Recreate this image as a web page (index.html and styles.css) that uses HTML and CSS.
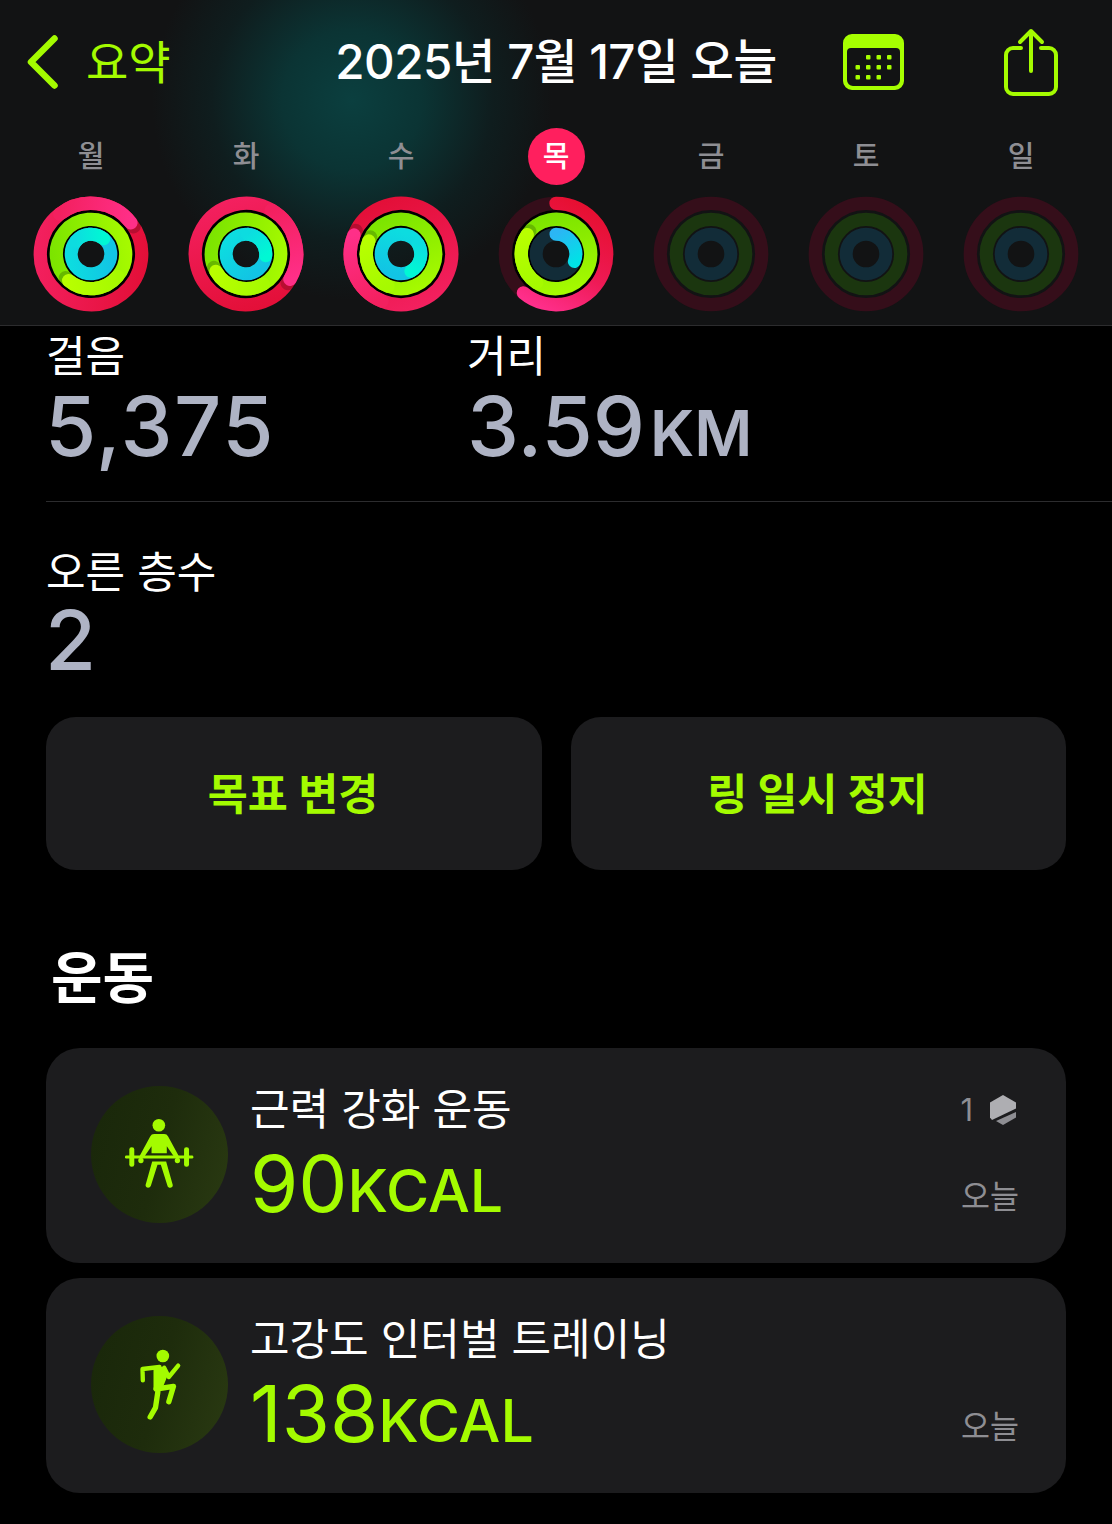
FILE: index.html
```html
<!DOCTYPE html>
<html lang="ko">
<head>
<meta charset="utf-8">
<title>활동 요약</title>
<link rel="stylesheet" href="styles.css">
</head>
<body>
<svg class="defs" width="0" height="0" aria-hidden="true">
  <defs>
    <linearGradient id="gPinkBase" gradientUnits="userSpaceOnUse" x1="40" y1="-40" x2="-40" y2="40"><stop offset="0" stop-color="#e30f38"/><stop offset="1" stop-color="#f3205f"/></linearGradient>
    <linearGradient id="gPinkEnd" gradientUnits="userSpaceOnUse" x1="-51" y1="0" x2="0" y2="-51"><stop offset="0" stop-color="#f3205f"/><stop offset="1" stop-color="#ff2f88"/></linearGradient>
    <linearGradient id="gGreenBase" gradientUnits="userSpaceOnUse" x1="28" y1="-28" x2="-28" y2="28"><stop offset="0" stop-color="#7ce400"/><stop offset="1" stop-color="#a6fa00"/></linearGradient>
    <linearGradient id="gGreenEnd" gradientUnits="userSpaceOnUse" x1="-36" y1="0" x2="0" y2="-36"><stop offset="0" stop-color="#a6fa00"/><stop offset="1" stop-color="#b8ff00"/></linearGradient>
    <linearGradient id="gCyanBase" gradientUnits="userSpaceOnUse" x1="15" y1="-15" x2="-15" y2="15"><stop offset="0" stop-color="#12c4e4"/><stop offset="1" stop-color="#0ddce0"/></linearGradient>
    <linearGradient id="gCyanEnd" gradientUnits="userSpaceOnUse" x1="-20" y1="0" x2="0" y2="-20"><stop offset="0" stop-color="#0ddce0"/><stop offset="1" stop-color="#00f8d4"/></linearGradient>
    <linearGradient id="gPinkArc" gradientUnits="userSpaceOnUse" x1="30" y1="-50" x2="-25" y2="50"><stop offset="0" stop-color="#e60f30"/><stop offset="0.55" stop-color="#ee1a55"/><stop offset="1" stop-color="#ff2f8c"/></linearGradient>
    <linearGradient id="gCyanArc" gradientUnits="userSpaceOnUse" x1="0" y1="-20" x2="20" y2="8"><stop offset="0" stop-color="#2bb6f4"/><stop offset="1" stop-color="#00e2e6"/></linearGradient>
    <g id="gaps" fill="none" stroke="#000">
      <circle r="42.700" stroke-width="3.200"/>
      <circle r="27.200" stroke-width="2.400"/>
    </g>
    <g id="pinkWrap" fill="none" stroke-width="13.300">
      <circle r="50.700" stroke="url(#gPinkBase)"/>
      <circle cx="4" cy="-50.700" r="7.500" fill="#000" opacity=".2"/>
      <path d="M-50.700 0A50.700 50.700 0 0 1 0-50.700" stroke="url(#gPinkEnd)" stroke-linecap="round"/>
    </g>
    <g id="greenWrap" fill="none" stroke-width="13.300">
      <circle r="34.700" stroke="url(#gGreenBase)"/>
      <circle cx="4" cy="-34.700" r="7" fill="#000" opacity=".2"/>
      <path d="M-34.700 0A34.700 34.700 0 0 1 0-34.700" stroke="url(#gGreenEnd)" stroke-linecap="round"/>
    </g>
    <g id="cyanWrap" fill="none" stroke-width="13">
      <circle r="19.800" stroke="url(#gCyanBase)"/>
      <path d="M-19.800 0A19.800 19.800 0 0 1 0-19.800" stroke="url(#gCyanEnd)" stroke-linecap="round"/>
    </g>
    <g id="tracks" fill="none">
      <circle r="50.700" stroke="#350e1a" stroke-width="13.300"/>
      <circle r="34.700" stroke="#1b360f" stroke-width="13.300"/>
      <circle r="19.800" stroke="#122c38" stroke-width="13"/>
    </g>
  </defs>
</svg>

<header class="top">
  <nav class="nav">
    <a class="back">
      <svg class="chevron" viewBox="0 0 31 54"><path d="M27.500 3.500 4 27l23.500 23.500"/></svg>
      <span class="back-label">요약</span>
    </a>
    <h1 class="title">2025년 7월 17일 오늘</h1>
    <div class="actions">
      <svg class="calendar" viewBox="0 0 61 56">
        <path class="cal-body" fill-rule="evenodd" d="M9 0h43a9 9 0 0 1 9 9v38a9 9 0 0 1-9 9H9a9 9 0 0 1-9-9V9a9 9 0 0 1 9-9ZM8 14a4 4 0 0 0-4 4v28a6 6 0 0 0 6 6h41a6 6 0 0 0 6-6V18a4 4 0 0 0-4-4Z"/>
        <g class="cal-dots">
          <rect x="23" y="21" width="4.500" height="4.500" rx="1"/><rect x="33.500" y="21" width="4.500" height="4.500" rx="1"/><rect x="44" y="21" width="4.500" height="4.500" rx="1"/>
          <rect x="12.500" y="31" width="4.500" height="4.500" rx="1"/><rect x="23" y="31" width="4.500" height="4.500" rx="1"/><rect x="33.500" y="31" width="4.500" height="4.500" rx="1"/><rect x="44" y="31" width="4.500" height="4.500" rx="1"/>
          <rect x="12.500" y="41" width="4.500" height="4.500" rx="1"/><rect x="23" y="41" width="4.500" height="4.500" rx="1"/><rect x="33.500" y="41" width="4.500" height="4.500" rx="1"/>
        </g>
      </svg>
      <svg class="share" viewBox="0 0 54 68">
        <path d="M17 20H9a7 7 0 0 0-7 7v32a7 7 0 0 0 7 7h36a7 7 0 0 0 7-7V27a7 7 0 0 0-7-7h-8"/>
        <path d="M27 43V3M16 14 27 3l11 11"/>
      </svg>
    </div>
  </nav>
  <div class="week">
    <div class="day">
      <span class="day-label">월</span>
      <svg class="ring" viewBox="-58 -58 116 116"><use href="#gaps"/><use href="#pinkWrap" transform="rotate(52)"/><use href="#greenWrap" transform="rotate(220)"/><use href="#cyanWrap" transform="rotate(40)"/></svg>
    </div>
    <div class="day">
      <span class="day-label">화</span>
      <svg class="ring" viewBox="-58 -58 116 116"><use href="#gaps"/><use href="#pinkWrap" transform="rotate(120)"/><use href="#greenWrap" transform="rotate(240)"/><use href="#cyanWrap" transform="rotate(95)"/></svg>
    </div>
    <div class="day">
      <span class="day-label">수</span>
      <svg class="ring" viewBox="-58 -58 116 116"><use href="#gaps"/><use href="#pinkWrap" transform="rotate(292)"/><use href="#greenWrap" transform="rotate(292)"/><use href="#cyanWrap" transform="rotate(150)"/></svg>
    </div>
    <div class="day">
      <span class="day-label day-today">목</span>
      <svg class="ring" viewBox="-58 -58 116 116">
        <use href="#gaps"/>
        <use href="#tracks"/>
        <path d="M0-50.700A50.700 50.700 0 1 1-32.590 38.840" fill="none" stroke="url(#gPinkArc)" stroke-width="13.300" stroke-linecap="round"/>
        <use href="#greenWrap" transform="rotate(304)"/>
        <path d="M0-19.800A19.800 19.800 0 0 1 18.360 7.420" fill="none" stroke="url(#gCyanArc)" stroke-width="13" stroke-linecap="round"/>
      </svg>
    </div>
    <div class="day">
      <span class="day-label">금</span>
      <svg class="ring" viewBox="-58 -58 116 116"><use href="#tracks"/></svg>
    </div>
    <div class="day">
      <span class="day-label">토</span>
      <svg class="ring" viewBox="-58 -58 116 116"><use href="#tracks"/></svg>
    </div>
    <div class="day">
      <span class="day-label">일</span>
      <svg class="ring" viewBox="-58 -58 116 116"><use href="#tracks"/></svg>
    </div>
  </div>
</header>

<main class="content">
  <section class="stats stats-first">
    <div class="stat">
      <div class="stat-label">걸음</div>
      <div class="stat-value stat-value-left">5,375</div>
    </div>
    <div class="stat">
      <div class="stat-label">거리</div>
      <div class="stat-value">3.59<span class="stat-unit">KM</span></div>
    </div>
  </section>
  <section class="stats stats-second">
    <div class="stat">
      <div class="stat-label">오른 층수</div>
      <div class="stat-value stat-value-left stat-value-raised">2</div>
    </div>
  </section>

  <div class="buttons">
    <button class="btn">목표 변경</button>
    <button class="btn">링 일시 정지</button>
  </div>

  <h2 class="section-title">운동</h2>

  <div class="cards">
    <article class="card">
      <div class="badge">
        <svg class="lifter" viewBox="130 110 220 230">
          <circle cx="238" cy="137" r="19"/>
          <path d="M222 163h32c6 0 9 2 12 8l34 62h-15l-23-33v21h-46v-21l-23 33h-15l34-62c3-6 6-8 12-8Z"/>
          <rect x="149" y="203" width="15" height="59" rx="7"/>
          <rect x="314" y="203" width="15" height="59" rx="7"/>
          <rect x="136" y="228" width="206" height="9" rx="4"/>
          <path d="M218 246h42l20 71c1 10-14 11-16 2l-20-63h-10l-20 63c-3 9-17 7-16-2Z"/>
          <circle cx="184" cy="243" r="8"/>
          <circle cx="294" cy="243" r="8"/>
        </svg>
      </div>
      <div class="card-main">
        <div class="card-title">근력 강화 운동</div>
        <div class="card-value">90<span class="card-unit">KCAL</span></div>
      </div>
      <div class="card-side">
        <div class="reps">
          <span>1</span>
          <svg class="hex" viewBox="0 0 28 30">
            <path class="hex-a" d="M14 0 27 7.500V13.500L3 25 1 22.500V7.500Z"/>
            <path class="hex-b" d="M27 17V22.500L14 30 7 26Z"/>
          </svg>
        </div>
        <div class="card-date">오늘</div>
      </div>
    </article>
    <article class="card">
      <div class="badge">
        <svg class="runner" viewBox="170 110 140 225">
          <circle cx="250" cy="137" r="19"/>
          <path class="limb-fill" d="M222 170h36l6 26-16 40-26 4Z"/>
          <path class="limb limb-arm" d="M190 210 189 176 240 170"/>
          <path class="limb limb-arm" d="M254 172 268 200 296 166"/>
          <path class="limb limb-leg" d="M230 236 282 228 268 274"/>
          <path class="limb limb-leg" d="M235 245 228 292 212 320"/>
        </svg>
      </div>
      <div class="card-main">
        <div class="card-title">고강도 인터벌 트레이닝</div>
        <div class="card-value">138<span class="card-unit">KCAL</span></div>
      </div>
      <div class="card-side">
        <div class="card-date">오늘</div>
      </div>
    </article>
  </div>
</main>
</body>
</html>
```
FILE: styles.css
```css
* { box-sizing: border-box; }
html, body { margin: 0; padding: 0; background: #000; }
body {
  width: 1112px;
  height: 1524px;
  overflow: hidden;
  color: #fff;
  font-family: "Inter", "Noto Sans CJK KR", sans-serif;
}
.defs { display: block; width: 0; height: 0; }

/* header */
.top {
  height: 326px;
  border-bottom: 1px solid #2c2c2e;
  background:
    radial-gradient(ellipse 200px 200px at 352px 100px, #0b3f3f 0%, #0b3434 35%, rgba(13, 36, 37, .6) 70%, rgba(18, 19, 20, 0) 100%),
    #121314;
}
.nav {
  display: grid;
  grid-template-columns: 1fr auto 1fr;
  align-items: center;
  height: 124px;
}
.back { display: flex; align-items: center; gap: 28px; padding-left: 27px; }
.chevron { width: 31px; height: 54px; fill: none; stroke: #a4fb00; stroke-width: 6.500; stroke-linecap: round; stroke-linejoin: round; }
.back-label { font-size: 46px; line-height: 50px; color: #a4fb00; font-weight: 400; }
.title { margin: 0; font-size: 47.500px; line-height: 50px; font-weight: 500; letter-spacing: -.5px; }
.actions { display: flex; justify-content: space-between; align-items: center; padding: 0 54px 0 66px; }
.calendar { width: 61px; height: 56px; }
.cal-body { fill: #a6ff00; }
.cal-dots { fill: #a6ff00; }
.share { width: 54px; height: 68px; fill: none; stroke: #a4fb00; stroke-width: 4; stroke-linecap: round; stroke-linejoin: round; }

.week {
  display: grid;
  grid-template-columns: repeat(7, 155px);
  padding-left: 13.500px;
}
.day { display: flex; flex-direction: column; align-items: center; }
.day-label {
  width: 57px;
  height: 57px;
  padding-bottom: 5px;
  display: flex;
  align-items: center;
  justify-content: center;
  font-size: 29px;
  font-weight: 500;
  color: #8e8e93;
  margin-top: 4px;
}
.day-today { background: #ff1f5e; border-radius: 50%; color: #fff; }
.ring { width: 116px; height: 116px; margin-top: 11px; }

/* stats */
.content { padding: 3px 46px 0; }
.stats-first {
  display: grid;
  grid-template-columns: 421px 1fr;
  height: 173px;
  margin-right: -46px;
  padding-top: 2px;
  border-bottom: 1px solid #2c2c2e;
}
.stats-second { padding-top: 45px; height: 215px; }
.stat-label { font-size: 43px; line-height: 50px; font-weight: 400; color: #fff; }
.stat-value { font-size: 83px; line-height: 90px; font-weight: 500; color: #aeb3c4; white-space: nowrap; }
.stat-value-left { margin-left: -1px; letter-spacing: 1.600px; }
.stat-value-raised { margin-top: -2px; }
.stat-unit { font-size: 63px; font-weight: 600; margin-left: 5px; }

/* buttons */
.buttons { display: grid; grid-template-columns: 496px 495px; gap: 29px; }
.btn {
  height: 153px;
  border: 0;
  border-radius: 30px;
  padding: 0 2px 0 0;
  background: #1c1c1e;
  color: #a4fb00;
  font: 700 43.500px/50px "Inter", "Noto Sans CJK KR", sans-serif;
}

.section-title { margin: 78px 0 40px 5px; font-size: 56px; line-height: 60px; font-weight: 700; }

/* cards */
.cards { display: flex; flex-direction: column; gap: 15px; }
.card {
  display: flex;
  height: 215px;
  border-radius: 34px;
  background: #1c1c1e;
  padding: 0 47px 0 45px;
}
.badge {
  width: 137px;
  height: 137px;
  margin-top: 38px;
  border-radius: 50%;
  display: flex;
  align-items: center;
  justify-content: center;
  flex: none;
  background: linear-gradient(105deg, #19270a 0%, #1e2c0c 50%, #2a3a12 100%);
}
.lifter { width: 73px; height: 77px; fill: #a4fb00; }
.runner { width: 47px; height: 75px; fill: #a4fb00; }
.limb { fill: none; stroke: #a4fb00; stroke-linecap: round; stroke-linejoin: round; }
.limb-arm { stroke-width: 13; }
.limb-leg { stroke-width: 16; }
.card-main { flex: 1; padding: 36px 0 0 22px; }
.card-title { font-size: 43px; line-height: 50px; font-weight: 400; color: #fff; }
.card-value { font-size: 78px; line-height: 99px; font-weight: 400; color: #a4fb00; white-space: nowrap; }
.card-unit { font-size: 59px; font-weight: 500; }
.card-side { display: flex; flex-direction: column; align-items: flex-end; padding: 46px 0 50px; }
.reps { display: flex; align-items: center; gap: 16px; margin-right: 2px; font-size: 31px; line-height: 32px; color: #8e8e93; }
.hex { width: 28px; height: 30px; }
.hex-a { fill: #aeaeb2; }
.hex-b { fill: #8e8e93; }
.card-date { margin-top: auto; font-size: 31.500px; line-height: 32px; color: #8e8e93; }
```
